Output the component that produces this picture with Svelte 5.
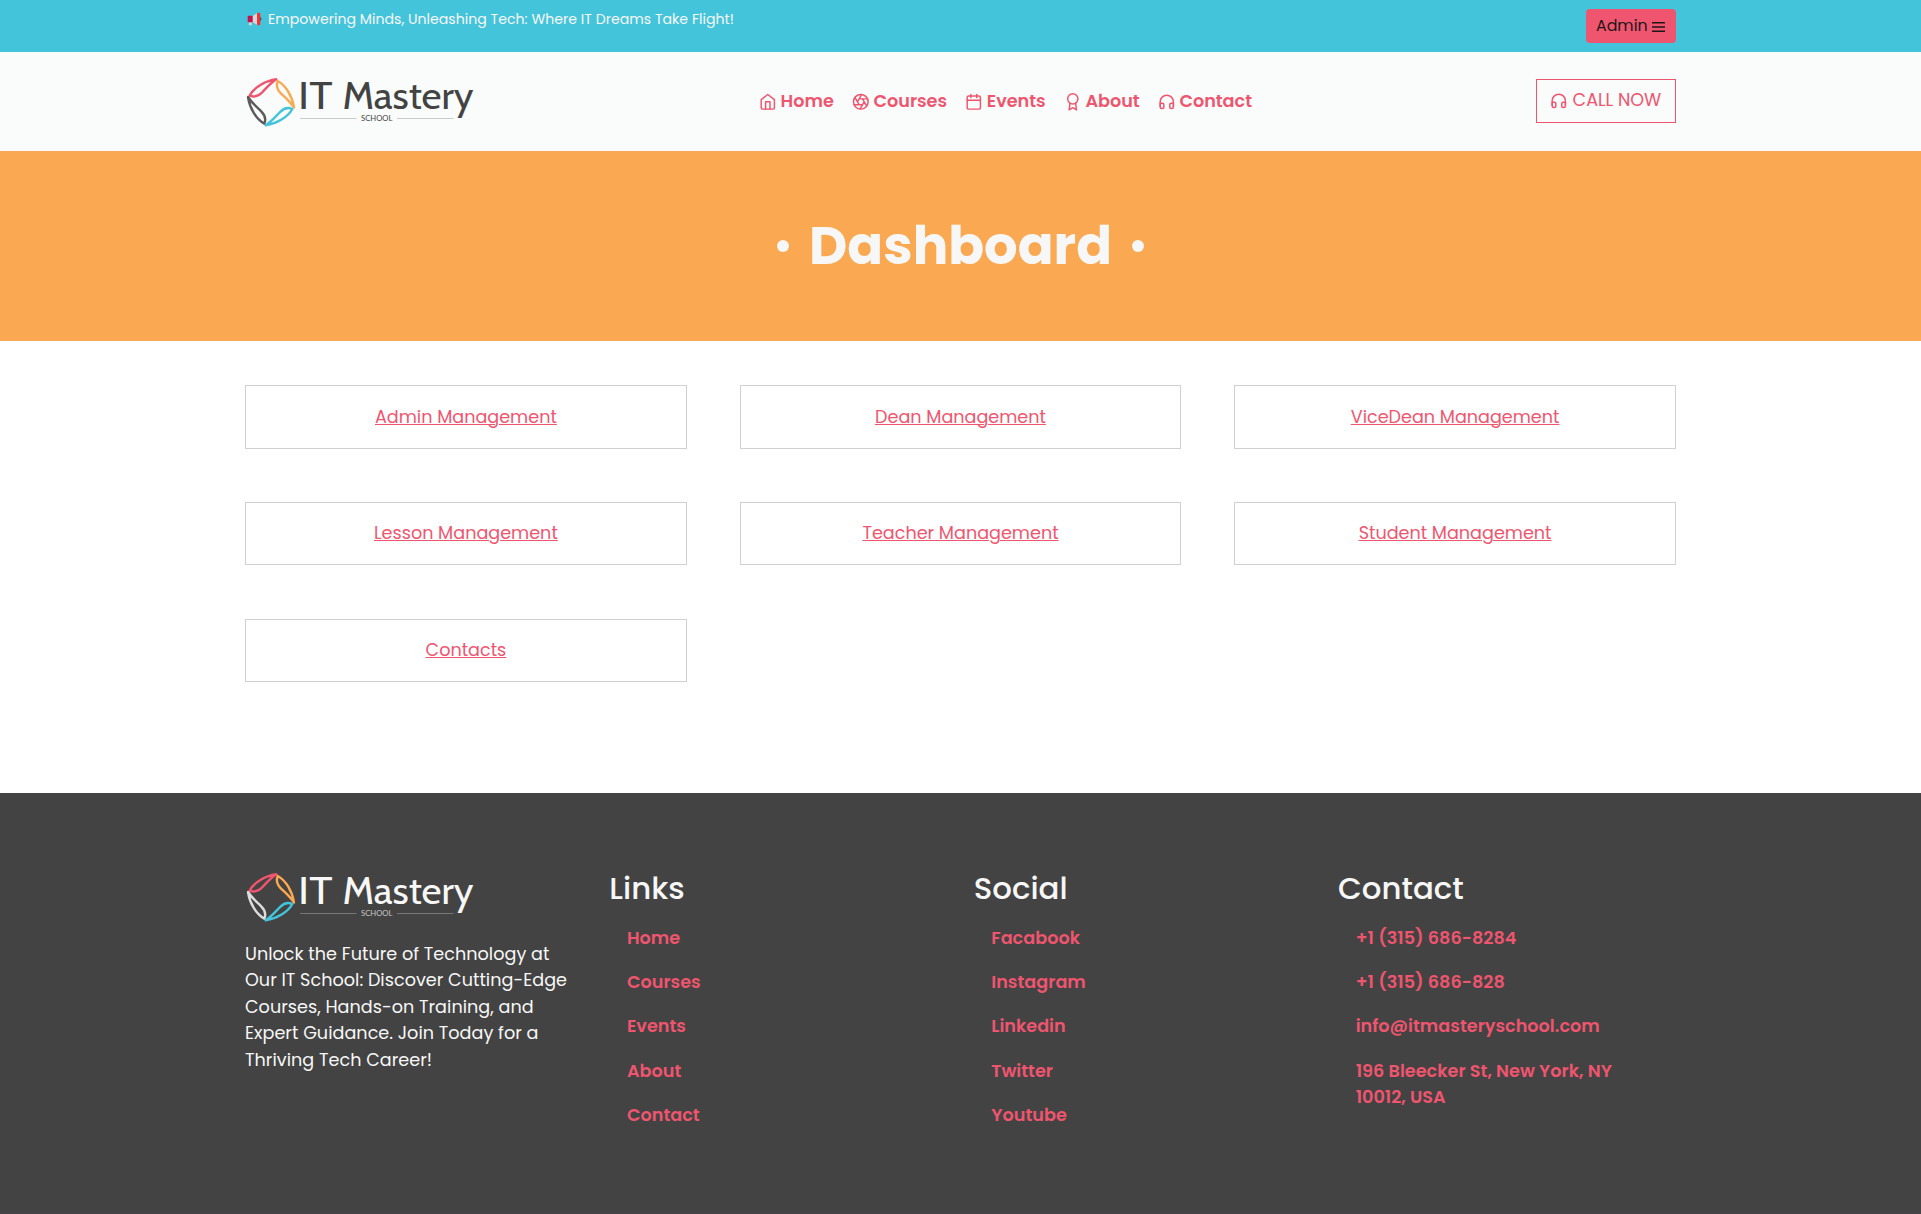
<script>
  const nav = [
    { label: 'Home', icon: 'home' },
    { label: 'Courses', icon: 'aperture' },
    { label: 'Events', icon: 'calendar' },
    { label: 'About', icon: 'award' },
    { label: 'Contact', icon: 'headphones' }
  ];

  const cards = [
    'Admin Management',
    'Dean Management',
    'ViceDean Management',
    'Lesson Management',
    'Teacher Management',
    'Student Management',
    'Contacts'
  ];

  const columns = [
    { title: 'Links', items: ['Home', 'Courses', 'Events', 'About', 'Contact'] },
    { title: 'Social', items: ['Facabook', 'Instagram', 'Linkedin', 'Twitter', 'Youtube'] },
    {
      title: 'Contact',
      items: [
        '+1 (315) 686-8284',
        '+1 (315) 686-828',
        'info@itmasteryschool.com',
        '196 Bleecker St, New York, NY 10012, USA'
      ]
    }
  ];

  const leaf = 'M31.3 4.300C20 6 9 12.500 4.700 20.600C9 22.500 13.500 21 17 17.500C21.500 13 25 8.500 31.300 4.300Z';
</script>

{#snippet icon(name)}
  <svg class="icon" viewBox="0 0 24 24" aria-hidden="true">
    {#if name === 'home'}
      <path d="M3 9l9-7 9 7v11a2 2 0 0 1-2 2H5a2 2 0 0 1-2-2z" />
      <path d="M9 22V12h6v10" />
    {:else if name === 'aperture'}
      <circle cx="12" cy="12" r="10" />
      <path d="M14.31 8l5.74 9.94M9.69 8h11.48M7.38 12l5.74-9.94M9.69 16L3.95 6.06M14.31 16H2.83M16.62 12l-5.74 9.94" />
    {:else if name === 'calendar'}
      <rect x="3" y="4" width="18" height="18" rx="2" />
      <path d="M16 2v4M8 2v4M3 10h18" />
    {:else if name === 'award'}
      <circle cx="12" cy="8" r="7" />
      <path d="M8.21 13.89L7 23l5-3 5 3-1.21-9.12" />
    {:else}
      <path d="M3 18v-6a9 9 0 0 1 18 0v6" />
      <path d="M21 19a2 2 0 0 1-2 2h-1a2 2 0 0 1-2-2v-3a2 2 0 0 1 2-2h3zM3 19a2 2 0 0 0 2 2h1a2 2 0 0 0 2-2v-3a2 2 0 0 0-2-2H3z" />
    {/if}
  </svg>
{/snippet}

{#snippet logo(dark)}
  <svg class="logo" class:dark viewBox="0 0 230 54" role="img" aria-label="IT Mastery School">
    <g class="leaves">
      <path class="pink" d={leaf} />
      <path class="orange" d={leaf} transform="rotate(90 26 27.300)" />
      <path class="blue" d={leaf} transform="rotate(180 26 27.300)" />
      <path class="stem" d={leaf} transform="rotate(270 26 27.300)" />
    </g>
    <text class="word" x="53" y="33.600" textLength="34.500" lengthAdjust="spacingAndGlyphs">IT</text>
    <text class="word" x="97.500" y="33.600" textLength="131" lengthAdjust="spacingAndGlyphs">Mastery</text>
    <path class="rule" d="M55 43.500h56.500M152 43.500h56.500" />
    <text class="school" x="116" y="46.200" textLength="31.500" lengthAdjust="spacingAndGlyphs">SCHOOL</text>
  </svg>
{/snippet}

<div class="page">
  <div class="topbar">
    <div class="container topbar-row">
      <p class="tagline">
        <svg class="horn" viewBox="0 0 16 14" aria-hidden="true">
          <path fill="#d3d6da" d="M5 4.200L10.500 1v12L5 9.800zM1.800 10h3v3.300h-3z" />
          <path fill="#c1134e" d="M1.600 3.700h4.100v6.600H1.600Q.7 10.300.7 9.400V4.600Q.7 3.700 1.600 3.700z" />
          <rect fill="#f5332f" x="10" y=".7" width="3.300" height="12.600" rx="1.200" />
          <path fill="#3b3438" d="M13.300 5q2.200 2 0 4z" />
        </svg>
        <span>Empowering Minds, Unleashing Tech: Where IT Dreams Take Flight!</span>
      </p>
      <button class="admin">
        <span>Admin</span>
        <svg class="bars" viewBox="0 0 13 10" aria-hidden="true"><path d="M0 .8h13M0 5h13M0 9.200h13" /></svg>
      </button>
    </div>
  </div>

  <header>
    <div class="container header-row">
      {@render logo(false)}
      <nav>
        {#each nav as item}
          <a href="#top">{@render icon(item.icon)}<span>{item.label}</span></a>
        {/each}
      </nav>
      <a class="call" href="#call">{@render icon('headphones')}<span>CALL NOW</span></a>
    </div>
  </header>

  <section class="hero">
    <i class="dot"></i>
    <h1>Dashboard</h1>
    <i class="dot"></i>
  </section>

  <main class="container">
    {#each cards as card}
      <div class="card"><a href="#card">{card}</a></div>
    {/each}
  </main>

  <footer>
    <div class="container footer-grid">
      <div class="about">
        {@render logo(true)}
        <p>
          Unlock the Future of Technology at Our IT School: Discover Cutting-Edge Courses, Hands-on
          Training, and Expert Guidance. Join Today for a Thriving Tech Career!
        </p>
      </div>
      {#each columns as column}
        <div class="column">
          <h2>{column.title}</h2>
          <ul>
            {#each column.items as item}
              <li>{item}</li>
            {/each}
          </ul>
        </div>
      {/each}
    </div>
  </footer>
</div>

<style>
  :global(body) {
    margin: 0;
    overflow: hidden;
  }
  .page {
    display: flex;
    flex-direction: column;
    height: 1214px;
    font-family: Poppins, Inter, 'Open Sans', sans-serif;
    font-size: 17.6px;
    line-height: 26.4px;
    color: #434343;
    background: #fff;
  }
  .container {
    box-sizing: border-box;
    width: 1431px;
    margin: 0 auto;
  }
  a {
    color: #ef556f;
    text-decoration: none;
  }
  h1, h2, p, ul {
    margin: 0;
    padding: 0;
  }
  ul {
    list-style: none;
  }
  .icon {
    flex: none;
    width: 17.6px;
    height: 17.6px;
    fill: none;
    stroke: currentColor;
    stroke-width: 2;
    stroke-linecap: round;
    stroke-linejoin: round;
  }

  .topbar {
    height: 52px;
    background: #44c4da;
  }
  .topbar-row {
    display: flex;
    justify-content: space-between;
    align-items: flex-start;
  }
  .tagline {
    display: flex;
    gap: 5px;
    padding: 9px 0 0 2px;
    font-size: 14.08px;
    line-height: 20px;
    letter-spacing: 0.025px;
    color: #f7f7f7;
  }
  .horn {
    width: 16px;
    height: 14px;
    margin-top: 3px;
  }
  .admin {
    display: flex;
    align-items: center;
    gap: 4px;
    box-sizing: border-box;
    width: 90px;
    height: 34px;
    margin-top: 9px;
    padding: 0 10px;
    border: 0;
    border-radius: 4px;
    background: #ef556f;
    color: #1e1517;
    font: 15.84px/24px Poppins, Inter, sans-serif;
  }
  .bars {
    flex: none;
    width: 13px;
    height: 10px;
    margin-top: 1px;
    stroke: currentColor;
    stroke-width: 1.5;
  }

  header {
    background: #fafcfb;
  }
  .header-row {
    display: flex;
    justify-content: space-between;
    align-items: center;
    height: 99px;
  }
  .logo {
    display: block;
    width: 230px;
    height: 54px;
    overflow: visible;
    fill: #434343;
    stroke: #434343;
  }
  .logo.dark {
    fill: #f7f7f7;
    stroke: #f7f7f7;
  }
  .leaves {
    fill: none;
    stroke-width: 2.4;
    stroke-linejoin: round;
  }
  .pink { stroke: #ef556f; }
  .orange { stroke: #faa952; }
  .blue { stroke: #44c4da; }
  .stem { stroke: #5b5b5b; }
  .dark .stem { stroke: #dcdcdc; }
  .word {
    font: 37.8px 'Gill Sans', Cabin, Lato, sans-serif;
    stroke: none;
  }
  .rule {
    stroke: #c9cccb;
    stroke-width: 1;
  }
  .dark .rule { stroke: #777; }
  .school {
    font: 7.2px Lato, sans-serif;
    stroke: none;
  }
  .dark .school { fill: #c8c8c8; }
  nav {
    display: flex;
    gap: 18.2px;
    font-weight: 600;
  }
  nav a {
    display: flex;
    align-items: center;
    gap: 4px;
  }
  nav .icon {
    margin-top: 1px;
  }
  .call {
    display: flex;
    align-items: center;
    gap: 5px;
    box-sizing: border-box;
    width: 140px;
    height: 44px;
    margin-bottom: 1px;
    padding: 0 0 2px 13px;
    border: 1px solid #ef556f;
    white-space: nowrap;
  }
  .call .icon {
    margin-top: 2px;
  }

  .hero {
    display: flex;
    justify-content: center;
    align-items: center;
    gap: 20px;
    height: 190px;
    background: #faa952;
  }
  h1 {
    font-size: 52.8px;
    font-weight: 700;
    line-height: 78px;
    color: #f7f7f7;
  }
  .dot {
    width: 12px;
    height: 12px;
    border-radius: 50%;
    background: #f7f7f7;
  }

  main {
    display: grid;
    grid-template-columns: repeat(3, 1fr);
    grid-auto-rows: 63.6px;
    align-content: start;
    gap: 53.1px 52.8px;
    height: 452px;
    padding-top: 44.2px;
  }
  .card {
    display: flex;
    justify-content: center;
    align-items: center;
    border: 1px solid #cfd1d0;
  }
  .card a {
    text-decoration: underline;
    text-decoration-thickness: 1px;
  }

  footer {
    flex: 1;
    border-bottom: 1px solid #4b4248;
    background: #434343;
    color: #f7f7f7;
  }
  .footer-grid {
    display: grid;
    grid-template-columns: repeat(4, 1fr);
    column-gap: 26.4px;
    padding-top: 77px;
  }
  .about p {
    padding-top: 17px;
    letter-spacing: 0.03px;
  }
  h2 {
    font-size: 30.8px;
    font-weight: 500;
    line-height: 37px;
  }
  .column ul {
    display: flex;
    flex-direction: column;
    gap: 17.8px;
    padding: 18px 17.6px 0;
    color: #ef556f;
    font-weight: 600;
    letter-spacing: 0.03px;
  }
  .column li {
    max-width: 270px;
  }
</style>
